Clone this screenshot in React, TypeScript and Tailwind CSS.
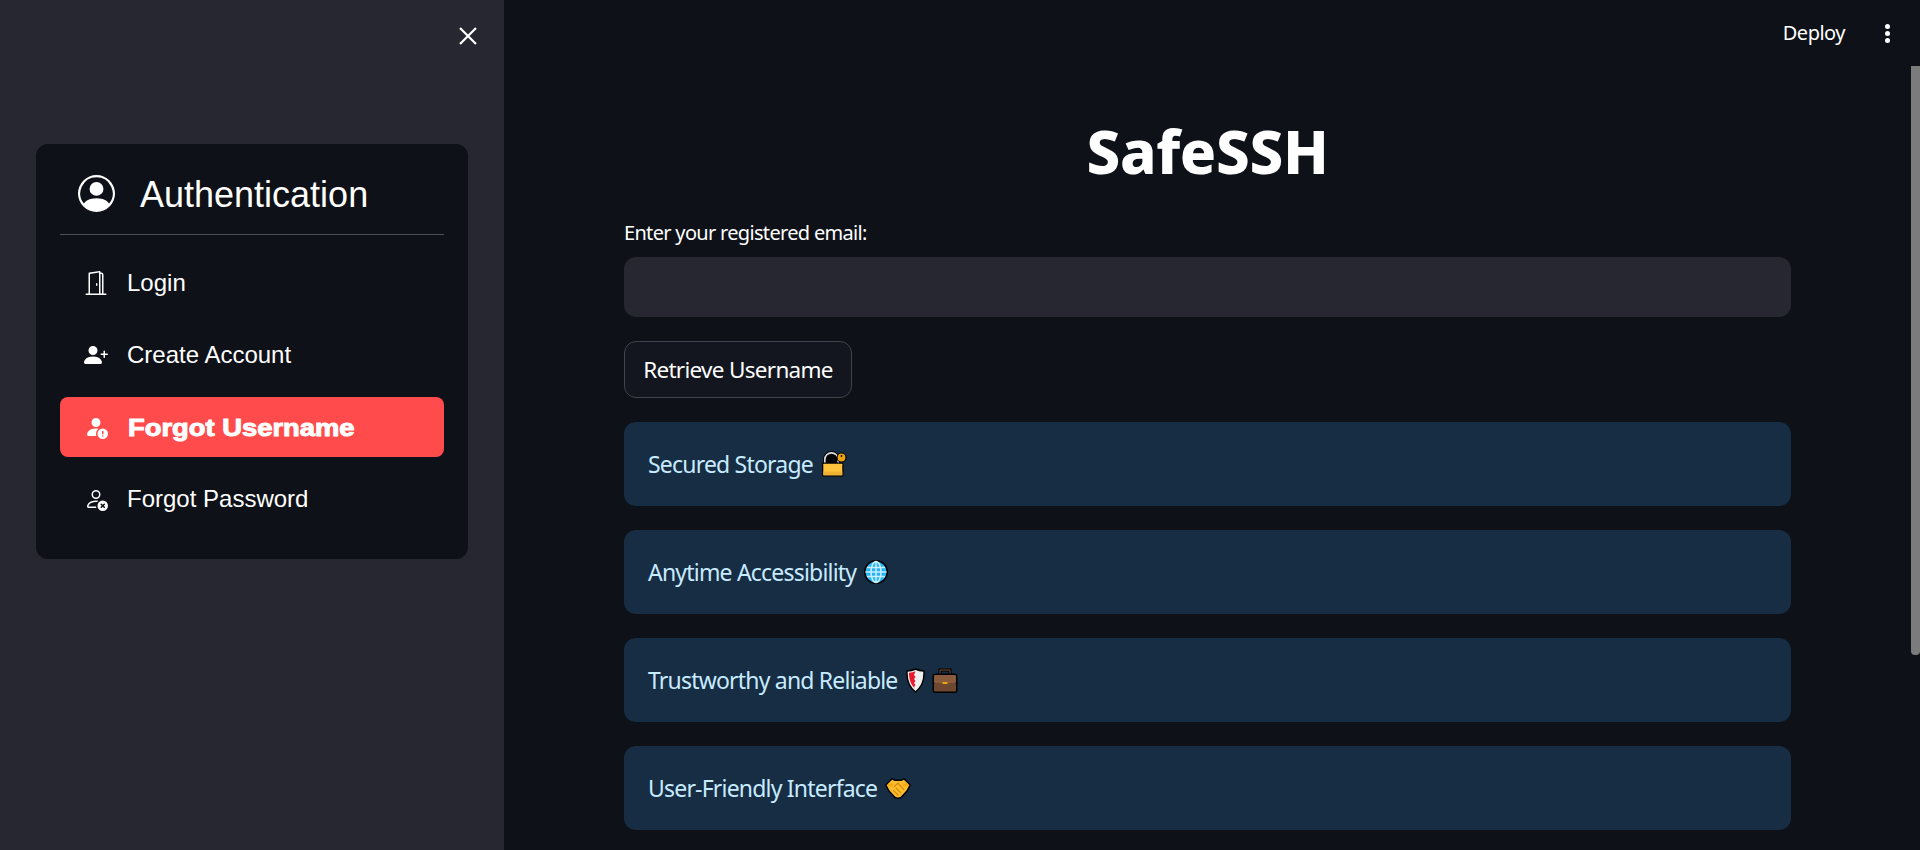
import { BsPersonCircle, BsDoorOpen, BsPersonPlusFill, BsPersonFillExclamation, BsPersonX } from "react-icons/bs";

function LockKey() {
  return (
    <svg width="26" height="26" viewBox="0 0 26 26" className="shrink-0">
      <path d="M2.500 12V8.500a8 8 0 0 1 16 0V12z" fill="#050505" stroke="#000" strokeWidth="1" />
      <path d="M3.800 12V8.500a6.700 6.700 0 0 1 13.400 0V12" fill="#050505" stroke="#dcdcdc" strokeWidth="1.700" />
      <rect x="1" y="11.500" width="21.500" height="14" rx="1.500" fill="#000" />
      <rect x="2.300" y="12.800" width="19" height="11.500" rx="0.500" fill="#fdc33d" />
      <path d="M2.300 20.500h19v3.800h-19z" fill="#eeb034" />
      <circle cx="20.500" cy="6.500" r="5" fill="#000" />
      <circle cx="20.500" cy="6.500" r="3.900" fill="#eba312" />
      <circle cx="20.500" cy="5" r="0.900" fill="#000" />
    </svg>
  );
}
function Globe() {
  return (
    <svg width="24" height="24" viewBox="0 0 24 24" className="shrink-0">
      <circle cx="12" cy="12" r="12" fill="#000" />
      <circle cx="12" cy="12" r="10.500" fill="#27b3f0" />
      <g fill="none" stroke="#c9eeff" strokeWidth="1.500">
        <ellipse cx="12" cy="12" rx="5" ry="10.500" />
        <path d="M3 7.500h18M1.500 12h21M3 16.500h18M12 1.500v21" />
      </g>
    </svg>
  );
}
function Shield() {
  return (
    <svg width="19" height="25" viewBox="0 0 19 25" className="shrink-0">
      <path d="M9.500 1c2.500 1.300 5 1.800 8.500 2 .5 8-1.500 15.500-8.500 21C2.500 18.500.5 11 1 3c3.500-.2 6-.7 8.500-2z" fill="#efefef" stroke="#000" strokeWidth="1.500" />
      <path d="M9.500 3.300C7.500 4.200 5.500 4.600 3 4.800c0 6 1.500 11.800 6.500 16.400L8 19l1.500-2L8 15l1.500-2L8 11l1.500-2L8 7z" fill="#e8192c" />
    </svg>
  );
}
function Briefcase() {
  return (
    <svg width="26" height="25" viewBox="0 0 26 25" className="shrink-0">
      <path d="M8 7V2h10v5" fill="none" stroke="#000" strokeWidth="3" />
      <path d="M8 7V2h10v5" fill="none" stroke="#7a5238" strokeWidth="1" />
      <rect x="0.500" y="5.500" width="25" height="19.500" rx="3" fill="#000" />
      <rect x="2" y="7" width="22" height="8" rx="1" fill="#8a5a3c" />
      <rect x="2" y="15" width="22" height="8.500" rx="1" fill="#6d4730" />
      <rect x="10.500" y="14" width="5" height="2" fill="#eba312" />
    </svg>
  );
}
function Handshake() {
  return (
    <svg width="26" height="21" viewBox="0 0 26 21" className="shrink-0">
      <path d="M.8 7 7 .8l3 1.500h6l3-1.500L25.200 7 22 13l-6 6.500q-3 1.500-6 0L4 13z" fill="#fbbd2e" stroke="#000" strokeWidth="1.500" strokeLinejoin="round" />
      <path d="M3 7h5M18 7h5" stroke="#f7a90f" strokeWidth="3" fill="none" />
      <path d="M9 9l4-4 6 7M8 12l5.500 5.500M11 10l5 5" fill="none" stroke="#d58d10" strokeWidth="1.300" />
    </svg>
  );
}

const items = [
  { label: "Login", icon: <BsDoorOpen className="h-6 w-6" />, active: false },
  { label: "Create Account", icon: <BsPersonPlusFill className="h-6 w-6" />, active: false },
  { label: "Forgot Username", icon: <BsPersonFillExclamation className="h-6 w-6" />, active: true },
  { label: "Forgot Password", icon: <BsPersonX className="h-6 w-6" />, active: false },
];

const cards = [
  { label: "Secured Storage", icons: <LockKey /> },
  { label: "Anytime Accessibility", icons: <Globe /> },
  { label: "Trustworthy and Reliable", icons: <div className="flex items-center gap-[7px]"><Shield /><Briefcase /></div> },
  { label: "User-Friendly Interface", icons: <Handshake /> },
];

export default function App() {
  return (
    <div className="relative flex h-[850px] w-[1920px] overflow-hidden bg-[#0e1117] text-white">
      <aside className="flex w-[504px] shrink-0 flex-col bg-[#262730] px-9 font-['Liberation_Sans',sans-serif]">
        <div className="flex h-[72px] items-center justify-end">
          <svg width="20" height="20" viewBox="0 0 20 20" className="mr-[-10px]" fill="none" stroke="white" strokeWidth="2.200">
            <path d="M2 2l16 16M18 2L2 18" />
          </svg>
        </div>
        <div className="mt-[72px] rounded-xl bg-[#0e1117] px-6 pb-[30px]">
          <div className="flex h-[91px] items-center border-b border-[#4d4f57] pl-[18px] pt-2">
            <BsPersonCircle className="h-[37px] w-[37px]" />
            <span className="ml-[25px] mt-1 text-[36px] leading-none">Authentication</span>
          </div>
          <nav className="mt-[18px] flex flex-col gap-3">
            {items.map((it) => (
              <div
                key={it.label}
                className={`flex h-[60px] items-center rounded-lg pl-6 text-[24px] ${it.active ? "bg-[#ff4b4b]" : ""}`}
              >
                {it.icon}
                {it.active ? (
                  <span className="ml-5 mt-0.5 inline-block origin-left scale-x-[1.14] font-bold [-webkit-text-stroke:1px_white]">{it.label}</span>
                ) : (
                  <span className="ml-[19px]">{it.label}</span>
                )}
              </div>
            ))}
          </nav>
        </div>
      </aside>
      <main className="flex-1 font-['Noto_Sans',sans-serif]">
        <header className="flex h-[66px] items-center justify-end pr-[30px]">
          <span className="text-[20px] tracking-[-0.5px]">Deploy</span>
          <div className="ml-[40px] flex flex-col gap-[2px]">
            <span className="h-[5px] w-[5px] rounded-full bg-white" />
            <span className="h-[5px] w-[5px] rounded-full bg-white" />
            <span className="h-[5px] w-[5px] rounded-full bg-white" />
          </div>
        </header>
        <div className="ml-[120px] w-[1167px] pt-[49px]">
          <h1 className="text-center text-[60px] leading-[72px] font-extrabold tracking-[-0.3px]">SafeSSH</h1>
          <label className="mt-[34px] block text-[20px] leading-6 tracking-[-0.68px]">Enter your registered email:</label>
          <div className="mt-3 h-[60px] rounded-xl bg-[#262730]" />
          <button className="mt-6 h-[57px] w-[228px] rounded-xl border border-[#41444c] bg-[#13161e] text-[22.500px] tracking-[-0.7px]">Retrieve Username</button>
          <div className="mt-6 flex flex-col gap-6">
            {cards.map((c) => (
              <div key={c.label} className="flex h-[84px] items-center gap-2 rounded-xl bg-[#172d43] px-6 text-[23px] tracking-[-0.8px] text-[#c7ebff]">
                <span>{c.label}</span>
                {c.icons}
              </div>
            ))}
          </div>
        </div>
      </main>
      <div className="absolute right-0 top-[66px] h-[589px] w-[9px] rounded-b-[4px] bg-[#7b7b7c]" />
    </div>
  );
}
